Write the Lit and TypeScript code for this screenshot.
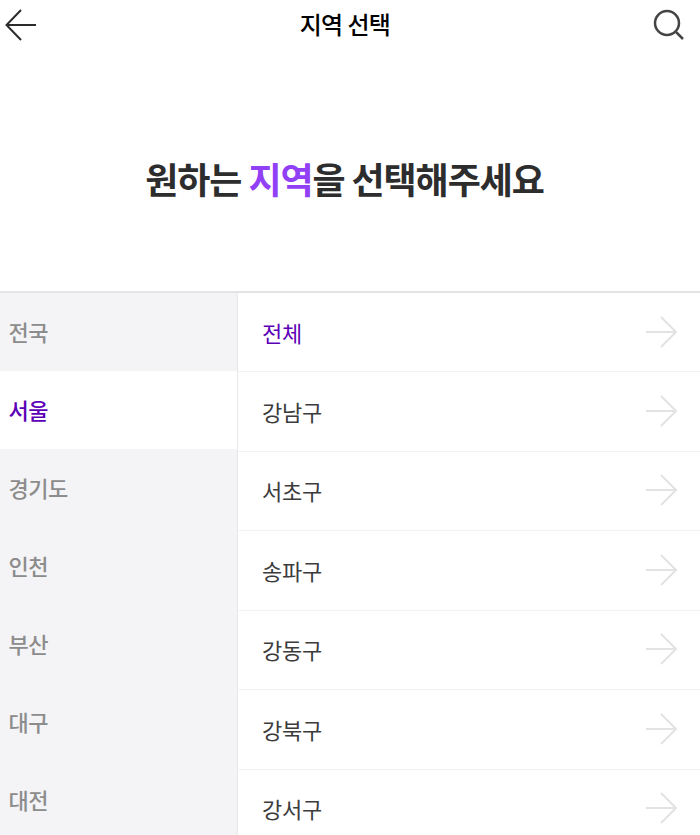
import { LitElement, html, css, svg } from 'lit';
import { customElement, state } from 'lit/decorators.js';

const REGIONS = ['전국', '서울', '경기도', '인천', '부산', '대구', '대전'];
const DISTRICTS = ['전체', '강남구', '서초구', '송파구', '강동구', '강북구', '강서구'];

const arrow = svg`<path d="M1 16H31M16 1L31 16L16 31" fill="none" stroke="currentColor" stroke-width="2" />`;

@customElement('app-root')
export class AppRoot extends LitElement {
  static override styles = css`
    :host {
      display: block;
      height: 835px;
      overflow: hidden;
      background: #fff;
      font-family: 'Noto Sans CJK KR', 'Liberation Sans', sans-serif;
    }

    .top-bar {
      display: flex;
      align-items: center;
      justify-content: space-between;
      height: 50px;
      padding: 0 15px 0 5px;
    }

    .top-bar h1 {
      margin: 0 0 4px;
      font-size: 24px;
      font-weight: 500;
      letter-spacing: -0.6px;
      color: #000;
    }

    .back {
      width: 32px;
      height: 32px;
      color: #2b2b2b;
    }

    .search {
      width: 32px;
      height: 32px;
      color: #444;
    }

    .headline {
      margin: 0;
      height: 243px;
      display: flex;
      align-items: center;
      justify-content: center;
      padding: 15px 11px 0 0;
      box-sizing: border-box;
      font-size: 36px;
      font-weight: 700;
      letter-spacing: -1.1px;
      color: #2d2d2d;
      border-bottom: 2px solid #e4e4e7;
      white-space: pre;
    }

    .headline em {
      font-style: normal;
      color: #9140f5;
    }

    .columns {
      display: grid;
      grid-template-columns: 238px 1fr;
    }

    .regions {
      background: #f4f4f6;
      border-right: 1px solid #e8e8ea;
    }

    .region {
      display: flex;
      align-items: center;
      height: 78px;
      padding-left: 8.5px;
      padding-bottom: 3px;
      box-sizing: border-box;
      font-size: 22px;
      color: #8c8c8c;
      font-weight: 500;
      letter-spacing: -0.5px;
    }

    .region.active {
      background: #fff;
      color: #5c00b8;
    }

    .district {
      display: flex;
      align-items: center;
      justify-content: space-between;
      box-sizing: border-box;
      height: 79.5px;
      padding: 0 23px 1px 24px;
      font-size: 22px;
      color: #3c3c3c;
      letter-spacing: -0.3px;
      border-bottom: 1.5px solid #f3f3f5;
    }

    .district:first-child {
      height: 79px;
    }

    .district.active {
      color: #5c00b8;
    }

    .district svg {
      width: 32px;
      height: 32px;
      color: #e3e3e6;
      flex: none;
    }
  `;

  @state() private region = '서울';
  @state() private district = '전체';

  override render() {
    return html`
      <header class="top-bar">
        <svg class="back" viewBox="0 0 32 32">
          <path d="M31 16H3M16 1L1.500 16L16 31" fill="none" stroke="currentColor" stroke-width="2" />
        </svg>
        <h1>지역 선택</h1>
        <svg class="search" viewBox="0 0 32 32">
          <circle cx="14" cy="14" r="12" fill="none" stroke="currentColor" stroke-width="2.500" />
          <path d="M23 23L30 30" fill="none" stroke="currentColor" stroke-width="2.500" />
        </svg>
      </header>
      <h2 class="headline">원하는 <em>지역</em>을 선택해주세요</h2>
      <div class="columns">
        <nav class="regions">
          ${REGIONS.map(
            (r) => html`<div class="region ${r === this.region ? 'active' : ''}" @click=${() => (this.region = r)}>${r}</div>`
          )}
        </nav>
        <div class="districts">
          ${DISTRICTS.map(
            (d) => html`
              <div class="district ${d === this.district ? 'active' : ''}" @click=${() => (this.district = d)}>
                <span>${d}</span>
                <svg viewBox="0 0 32 32">${arrow}</svg>
              </div>
            `
          )}
        </div>
      </div>
    `;
  }
}
